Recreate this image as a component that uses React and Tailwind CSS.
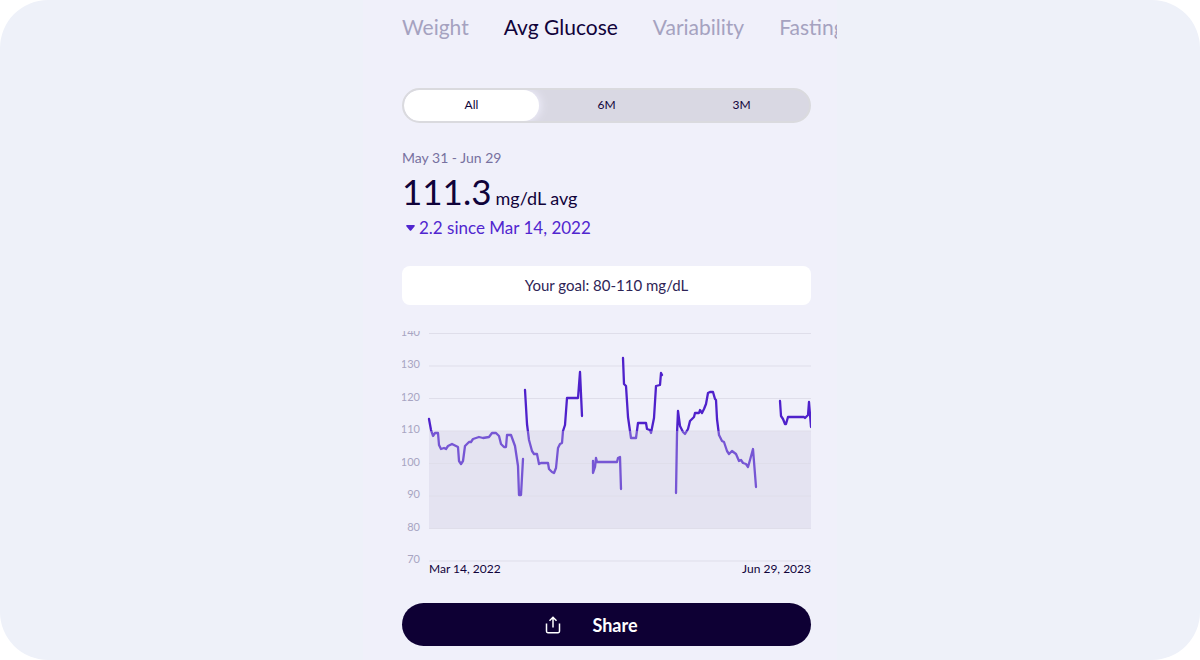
const tabs = ["Weight", "Avg Glucose", "Variability", "Fasting"];
const ranges = ["All", "6M", "3M"];
const ticks = [140, 130, 120, 110, 100, 90, 80, 70];

const lines = [
  "M429 419L431 430L433 436L435 433L438 433L439 445L441 449L444 448L446 449L448 446L452 444L456 446L458 447L459 461L461 464L463 461L465 446L467 444L469 442L471 442L473 439L479 437L483 438L489 437L492 433L496 433L499 436L501 444L504 447L506 447L507 435L511 435L515 446L518 466L519 495L521 495L523 459",
  "M525 390L527 424L529 440L532 451L534 454L537 454L539 464L541 463L548 463L549 469L552 472L554 473L556 468L558 448L560 444L562 443L563 431L565 425L567 398L578 398L580 372L582 416",
  "M593 461L593 473L595 467L596 458L597 462L617 462L618 458L620 457L621 489",
  "M623 358L624 384L626 386L628 417L631 438L636 438L638 423L646 423L647 429L650 430L651 433L654 418L656 386L660 385L661 373L662 375",
  "M676 493L677 434L678 411L680 426L683 432L685 434L688 429L690 421L694 417L695 413L699 413L700 410L702 413L704 409L706 404L708 393L710 392L713 392L715 399L716 400L717 419L719 435L722 441L724 442L727 451L729 454L732 451L736 454L739 461L741 460L743 463L746 464L748 467L750 460L753 449L756 487",
  "M780 401L781 416L783 419L785 424L786 424L788 417L804 417L805 418L808 415L809 402L811 427",
];

function Chart() {
  return (
    <svg viewBox="402 331 409 235" className="block w-full" role="img" aria-label="Average glucose, March 2022 to June 2023">
      <rect x="429" y="431" width="382" height="98" fill="#e4e3f1" />
      {ticks.map((t, i) => (
        <g key={t}>
          <line x1="429" x2="811" y1={333.5 + i * 32.5} y2={333.5 + i * 32.5} stroke="#dfdeea" strokeWidth="1" />
          <text x="420" y={335.5 + i * 32.5} textAnchor="end" fill="#a8a5c2" className="font-['Lato'] text-[11px]">{t}</text>
        </g>
      ))}
      <clipPath id="above"><rect x="402" y="330" width="410" height="101" /></clipPath>
      <clipPath id="inside"><rect x="402" y="431" width="410" height="140" /></clipPath>
      <g fill="none" strokeWidth="2.3" strokeLinejoin="round" strokeLinecap="round">
        <g clipPath="url(#above)" stroke="#4f21cb">{lines.map((d) => <path key={d} d={d} />)}</g>
        <g clipPath="url(#inside)" stroke="#7656d4">{lines.map((d) => <path key={d} d={d} />)}</g>
      </g>
    </svg>
  );
}

export default function App() {
  return (
    <div className="min-h-screen overflow-hidden rounded-[48px] bg-[#eef1f9] font-['Lato',sans-serif] text-[#10033a]">
      <main className="mx-auto min-h-screen max-w-[474px] overflow-hidden bg-[#f0f0fa] pt-[13px] pr-[26px] pb-3 pl-[39px]">
        <nav className="-mr-[26px] flex gap-[35px] overflow-hidden whitespace-nowrap text-[21px] leading-7 text-[#a5a2c0]">
          {tabs.map((t) => (
            <button key={t} className={t === "Avg Glucose" ? "text-[#10033a]" : ""}>{t}</button>
          ))}
        </nav>
        <div className="mt-[47px] flex h-[35px] overflow-hidden rounded-full border-2 border-[#dadade] bg-[#d9d8e3] text-xs">
          {ranges.map((r) => (
            <button key={r} className={r === "All" ? "flex-1 rounded-full bg-white pb-0.5 shadow-[2px_0_8px_#eeedfa]" : "flex-1 pb-0.5"}>{r}</button>
          ))}
        </div>
        <p className="mt-[25px] text-sm leading-5 text-[#7771a0]">May 31 - Jun 29</p>
        <p className="mt-[3px] flex items-baseline gap-1 leading-10">
          <span className="text-[35px] leading-10">111.3</span>
          <span className="text-lg">mg/dL avg</span>
        </p>
        <p className="mt-1 flex items-center gap-1 pl-1 text-[17px] leading-6 text-[#5126cf]">
          <svg viewBox="0 0 9 6" className="h-1.5 w-[9px]" fill="currentColor" aria-hidden="true"><path d="M1 0H8Q9.4 .4 8.5 1.4L5.2 5.4Q4.5 6 3.8 5.4L.5 1.4Q-.4 .4 1 0Z" /></svg>
          2.2 since Mar 14, 2022
        </p>
        <p className="mt-[26px] rounded-lg bg-white pb-px text-center text-[15px] leading-[38px] text-[#2e2456]">Your goal: 80-110 mg/dL</p>
        <div className="mt-[26px]"><Chart /></div>
        <div className="-mt-[5px] flex justify-between pl-[27px] text-xs leading-4">
          <span>Mar 14, 2022</span>
          <span>Jun 29, 2023</span>
        </div>
        <button className="mt-[26px] flex h-[43px] w-full items-center justify-center gap-[31px] rounded-full bg-[#0e0034] pr-[30px] text-lg font-bold text-white">
          <svg viewBox="0 0 16 18" className="h-[18px] w-4" fill="none" stroke="currentColor" strokeWidth="1.5" aria-hidden="true"><path d="M1.5 7.5V15.3Q1.5 16.7 2.8 16.7H13.2Q14.5 16.7 14.5 15.3V7.5M8 11.5V1.5M4.5 4.8L8 1.3L11.5 4.8" /></svg>
          Share
        </button>
      </main>
    </div>
  );
}
